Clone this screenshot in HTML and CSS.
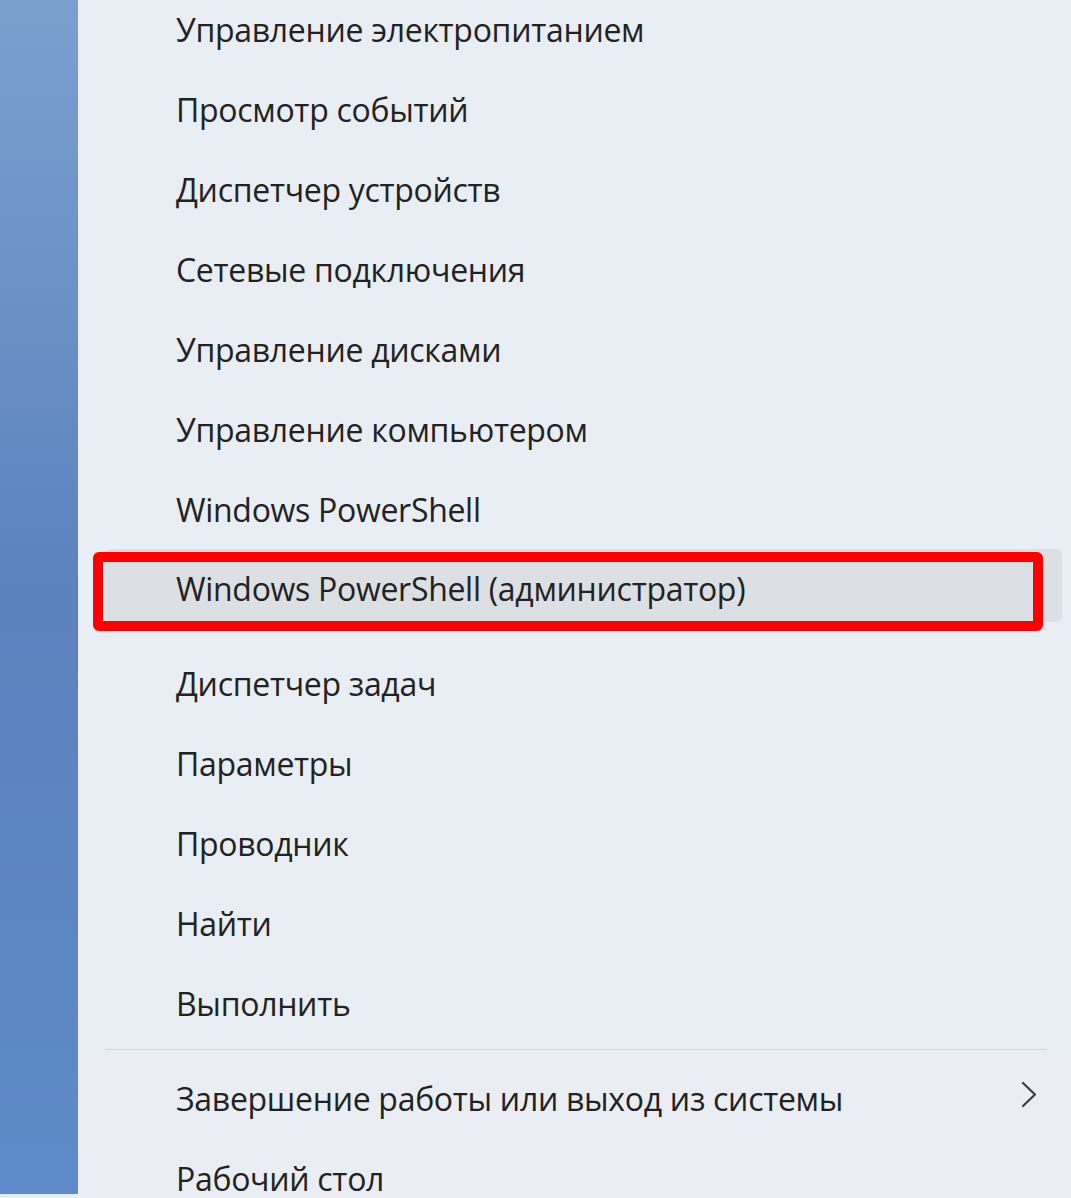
FILE: index.html
```html
<!DOCTYPE html>
<html lang="ru">
<head>
<meta charset="utf-8">
<title>Win+X menu</title>
<link rel="stylesheet" href="styles.css">
</head>
<body>
<div class="screen">
  <div class="desktop-strip"></div>
  <div class="menu">
    <ul class="items">
      <li class="item">Управление электропитанием</li>
      <li class="item">Просмотр событий</li>
      <li class="item">Диспетчер устройств</li>
      <li class="item">Сетевые подключения</li>
      <li class="item">Управление дисками</li>
      <li class="item">Управление компьютером</li>
      <li class="item">Windows PowerShell</li>
      <li class="item item-hover">Windows PowerShell (администратор)<span class="annotation"></span></li>
    </ul>
    <div class="separator"></div>
    <ul class="items">
      <li class="item">Диспетчер задач</li>
      <li class="item">Параметры</li>
      <li class="item">Проводник</li>
      <li class="item">Найти</li>
      <li class="item">Выполнить</li>
    </ul>
    <div class="separator separator-last"></div>
    <ul class="items">
      <li class="item item-sub">Завершение работы или выход из системы
        <svg class="chevron" width="17" height="27" viewBox="0 0 17 27"><polyline points="2,2 14,13.5 2,25" fill="none" stroke="#3c3c3c" stroke-width="2.2" stroke-linecap="round" stroke-linejoin="round"/></svg>
      </li>
      <li class="item">Рабочий стол</li>
    </ul>
  </div>
</div>
</body>
</html>
```

FILE: styles.css
```css
html, body {
  margin: 0;
  padding: 0;
  background: #eaeef4;
  overflow: hidden;
}

.screen {
  display: flex;
  width: 1071px;
  height: 1198px;
  overflow: hidden;
  background: #eaeef4;
}

.desktop-strip {
  flex: 0 0 78px;
  height: 1194px;
  background: linear-gradient(180deg, #7b9fcf 0%, #6b91c6 25%, #5b82bd 50%, #5c86c3 75%, #5f8ac9 100%);
  box-shadow: 1px 0 1px rgba(140, 160, 190, 0.35);
}

.menu {
  flex: 1;
  background: linear-gradient(180deg, #e9edf4 0%, #eaeef4 100%);
  font-family: "Open Sans", "Noto Sans", "DejaVu Sans", sans-serif;
  color: #222222;
  margin-top: -11px;
}

.items {
  list-style: none;
  margin: 0;
  padding: 0;
}

.item {
  position: relative;
  height: 80px;
  display: flex;
  align-items: center;
  padding-left: 98px;
  font-size: 32px;
  letter-spacing: -0.3px;
}

.item-hover {
  box-sizing: border-box;
  margin: 0 9px 7px 27px;
  padding-left: 71px;
  padding-top: 6px;
  background: #dcdfe3;
  border-radius: 6px;
  height: 73px;
}

.annotation {
  position: absolute;
  left: -12px;
  top: 3px;
  width: 930px;
  height: 59px;
  border: 10px solid #ff0000;
  border-radius: 6px;
  pointer-events: none;
}

.separator {
  height: 1px;
  background: #d2d6dc;
  margin: 5px 24px 13px 27px;
}

.separator-last {
  margin-top: 6px;
  margin-bottom: 8px;
}

.item-sub {
  justify-content: space-between;
  padding-right: 33px;
}

.chevron {
  display: block;
  margin-top: -8px;
}
```
